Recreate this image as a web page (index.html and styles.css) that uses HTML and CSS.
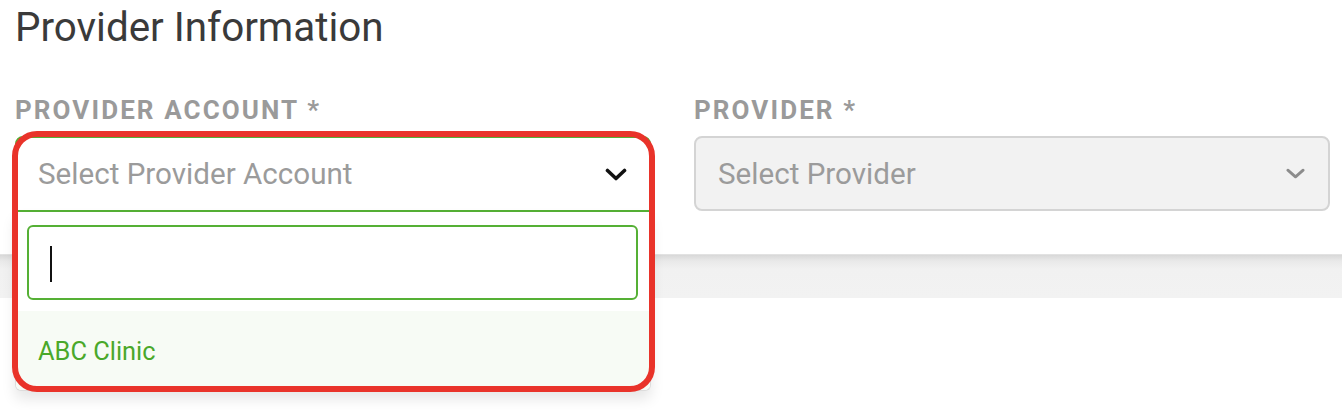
FILE: index.html
```html
<!DOCTYPE html>
<html lang="en">
<head>
<meta charset="utf-8">
<title>Provider Information</title>
<link rel="stylesheet" href="styles.css">
</head>
<body>
<div class="page">
  <h1 class="title">Provider Information</h1>
  <div class="form-row">
    <div class="field">
      <div class="label">PROVIDER ACCOUNT *</div>
      <div class="select-wrap">
        <div class="select select-open">
          <span class="placeholder">Select Provider Account</span>
          <svg class="chevron chevron-dark" viewBox="0 0 22 13" width="22" height="13"><path d="M2.5 2.5 L11 10.5 L19.5 2.5" fill="none" stroke="#111" stroke-width="3.6" stroke-linecap="round" stroke-linejoin="round"/></svg>
        </div>
        <div class="dropdown">
          <div class="search"><span class="caret"></span></div>
          <div class="option">ABC Clinic</div>
        </div>
        <div class="highlight"></div>
      </div>
    </div>
    <div class="field">
      <div class="label">PROVIDER *</div>
      <div class="select select-disabled">
        <span class="placeholder">Select Provider</span>
        <svg class="chevron" viewBox="0 0 22 13" width="21" height="13"><path d="M3 3 L11 10 L19 3" fill="none" stroke="#8c8c8c" stroke-width="3" stroke-linecap="round" stroke-linejoin="round"/></svg>
      </div>
    </div>
  </div>
  <div class="band"></div>
</div>
</body>
</html>
```

FILE: styles.css
```css
html, body {
  margin: 0;
  padding: 0;
  background: #ffffff;
}

body {
  font-family: Roboto, "Liberation Sans", Arial, sans-serif;
  color: #333333;
}

.page {
  width: 1342px;
  height: 410px;
  overflow: hidden;
}

.title {
  margin: 0;
  padding: 4px 0 0 15px;
  font-size: 40.4px;
  line-height: 48px;
  font-weight: 400;
  color: #3a3a3a;
}

.form-row {
  display: grid;
  grid-template-columns: 636px 636px;
  column-gap: 43px;
  padding: 43px 12px 0 15px;
}

.field {
  display: flex;
  flex-direction: column;
}

.label {
  font-size: 26px;
  line-height: 30px;
  font-weight: 700;
  letter-spacing: 2.1px;
  color: #9a9a9a;
  margin-bottom: 11px;
}

.select-wrap {
  position: relative;
}

.select {
  box-sizing: border-box;
  height: 76px;
  display: flex;
  align-items: center;
  justify-content: space-between;
  padding: 0 22px 0 21px;
  border-radius: 8px;
}

.select-open {
  border: 2px solid #55b035;
  border-radius: 8px 8px 0 0;
  background: #ffffff;
}

.select-disabled {
  border: 2px solid #d4d4d4;
  background: #f2f2f2;
  height: 75px;
  padding-left: 22px;
  padding-right: 22px;
}

.placeholder {
  font-size: 29.6px;
  color: #9b9b9b;
}

.chevron {
  display: block;
}

.dropdown {
  position: absolute;
  left: 0;
  right: 0;
  top: 76px;
  box-sizing: border-box;
  background: #ffffff;
  border: 1px solid #dcdcdc;
  border-top: none;
  border-radius: 0 0 6px 6px;
  box-shadow: 0 8px 14px rgba(0, 0, 0, 0.10);
  padding-top: 13px;
  z-index: 2;
}

.search {
  box-sizing: border-box;
  height: 75px;
  margin: 0 12px 0 11px;
  border: 2px solid #55b035;
  border-radius: 6px;
  display: flex;
  align-items: center;
  padding-left: 21px;
}

.caret {
  display: block;
  width: 2px;
  height: 36px;
  background: #111111;
  margin-top: 3px;
}

.option {
  margin-top: 11px;
  height: 79px;
  display: flex;
  align-items: center;
  padding-left: 22px;
  background: #f7fbf5;
  color: #4aa82a;
  font-size: 25.4px;
  border-radius: 0 0 6px 6px;
}

.highlight {
  position: absolute;
  left: -3px;
  top: -5px;
  right: -4px;
  height: 261px;
  box-sizing: border-box;
  border: 6px solid #e9332a;
  border-radius: 25px;
  z-index: 3;
  pointer-events: none;
}

.band {
  margin-top: 42px;
  height: 43px;
  background: linear-gradient(#d8d8d8 0, #e9e9e9 6px, #f1f1f1 14px, #f2f2f2 100%);
  border-top: 1px solid #e2e2e2;
}
```
